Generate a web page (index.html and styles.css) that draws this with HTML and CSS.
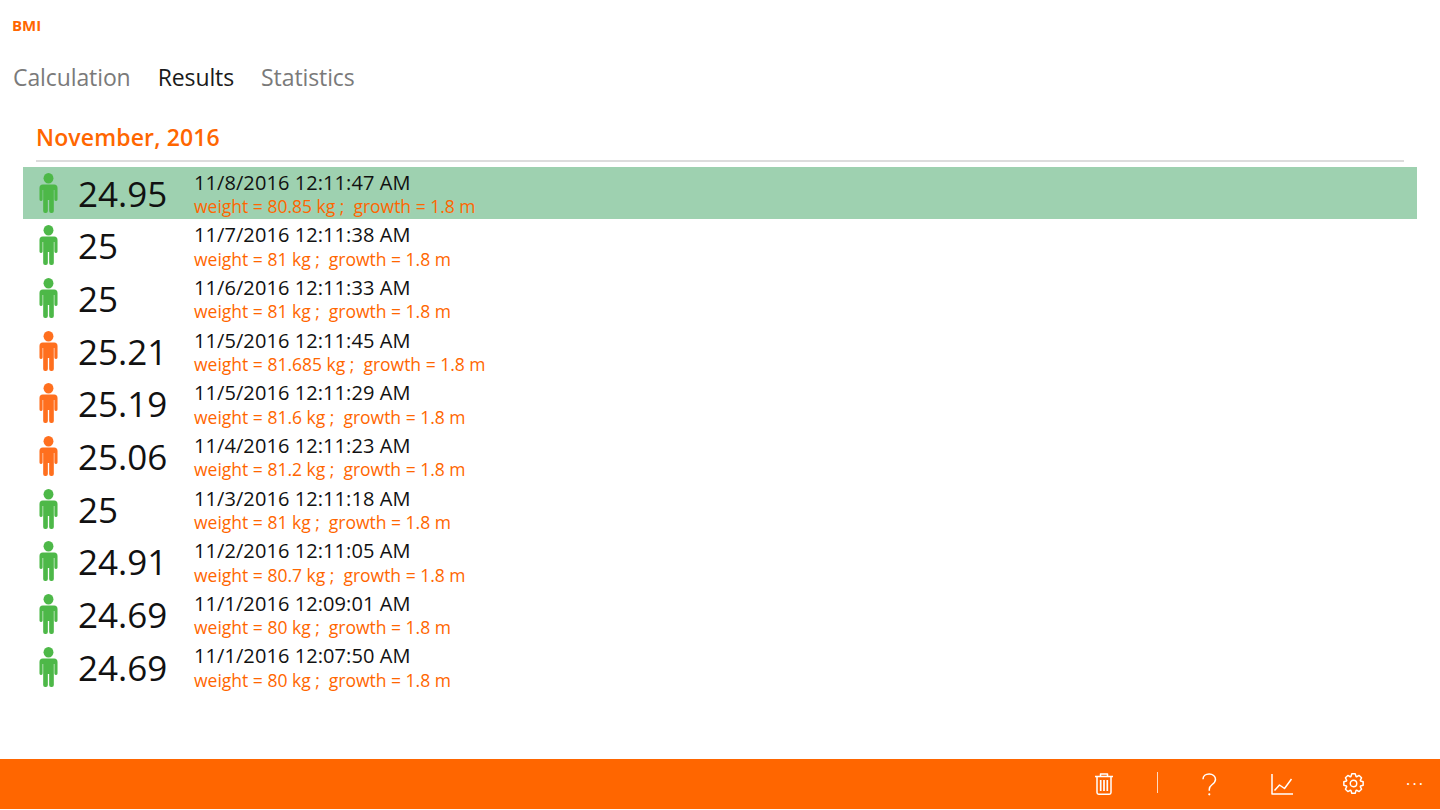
FILE: index.html
```html
<!DOCTYPE html>
<html lang="en">
<head>
<meta charset="utf-8">
<title>BMI</title>
<link rel="stylesheet" href="styles.css">
</head>
<body>
<svg class="defs" width="0" height="0" aria-hidden="true">
  <symbol id="person" viewBox="0 0 20 40" preserveAspectRatio="none">
    <circle cx="10" cy="5.200" r="5.200"/>
    <path d="M4 11.500h12a3.500 3.500 0 0 1 3.500 3.500v11.500a1.400 1.400 0 0 1-1.400 1.400h-.5a1.400 1.400 0 0 1-1.400-1.400V17h-.6v21a2 2 0 0 1-2 2h-.9a2 2 0 0 1-2-2V27h-1.400v11a2 2 0 0 1-2 2h-.9a2 2 0 0 1-2-2V17h-.6v9.500a1.400 1.400 0 0 1-1.400 1.400h-.5a1.400 1.400 0 0 1-1.400-1.400V15a3.500 3.500 0 0 1 3.500-3.500z"/>
  </symbol>
</svg>
<div class="app">
  <header class="title">BMI</header>
  <nav class="tabs">
    <span class="tab">Calculation</span>
    <span class="tab active">Results</span>
    <span class="tab">Statistics</span>
  </nav>
  <main class="content">
    <h2 class="month">November, 2016</h2>
    <ul class="list">
      <li class="row selected"><svg class="person ok"><use href="#person"/></svg><span class="bmi">24.95</span><div class="info"><div class="date">11/8/2016 12:11:47 AM</div><div class="detail">weight = 80.85 kg ;<span class="growth">growth = 1.8 m</span></div></div></li>
      <li class="row"><svg class="person ok"><use href="#person"/></svg><span class="bmi">25</span><div class="info"><div class="date">11/7/2016 12:11:38 AM</div><div class="detail">weight = 81 kg ;<span class="growth">growth = 1.8 m</span></div></div></li>
      <li class="row"><svg class="person ok"><use href="#person"/></svg><span class="bmi">25</span><div class="info"><div class="date">11/6/2016 12:11:33 AM</div><div class="detail">weight = 81 kg ;<span class="growth">growth = 1.8 m</span></div></div></li>
      <li class="row"><svg class="person over"><use href="#person"/></svg><span class="bmi">25.21</span><div class="info"><div class="date">11/5/2016 12:11:45 AM</div><div class="detail">weight = 81.685 kg ;<span class="growth">growth = 1.8 m</span></div></div></li>
      <li class="row"><svg class="person over"><use href="#person"/></svg><span class="bmi">25.19</span><div class="info"><div class="date">11/5/2016 12:11:29 AM</div><div class="detail">weight = 81.6 kg ;<span class="growth">growth = 1.8 m</span></div></div></li>
      <li class="row"><svg class="person over"><use href="#person"/></svg><span class="bmi">25.06</span><div class="info"><div class="date">11/4/2016 12:11:23 AM</div><div class="detail">weight = 81.2 kg ;<span class="growth">growth = 1.8 m</span></div></div></li>
      <li class="row"><svg class="person ok"><use href="#person"/></svg><span class="bmi">25</span><div class="info"><div class="date">11/3/2016 12:11:18 AM</div><div class="detail">weight = 81 kg ;<span class="growth">growth = 1.8 m</span></div></div></li>
      <li class="row"><svg class="person ok"><use href="#person"/></svg><span class="bmi">24.91</span><div class="info"><div class="date">11/2/2016 12:11:05 AM</div><div class="detail">weight = 80.7 kg ;<span class="growth">growth = 1.8 m</span></div></div></li>
      <li class="row"><svg class="person ok"><use href="#person"/></svg><span class="bmi">24.69</span><div class="info"><div class="date">11/1/2016 12:09:01 AM</div><div class="detail">weight = 80 kg ;<span class="growth">growth = 1.8 m</span></div></div></li>
      <li class="row"><svg class="person ok"><use href="#person"/></svg><span class="bmi">24.69</span><div class="info"><div class="date">11/1/2016 12:07:50 AM</div><div class="detail">weight = 80 kg ;<span class="growth">growth = 1.8 m</span></div></div></li>
    </ul>
  </main>
  <footer class="bar">
    <svg class="icon trash" viewBox="0 0 18 22"><path d="M0 3.600h18M5.500 3.600V1h7v2.600M2 3.600V19.500A1.700 1.700 0 0 0 3.700 21.200h10.600A1.700 1.700 0 0 0 16 19.500V3.600"/><path class="bars" d="M5.700 7v11M9 7v11M12.300 7v11"/></svg>
    <span class="sep"></span>
    <svg class="icon help" viewBox="0 0 15 23"><path d="M1 6.200C1 3 3.700 1 7.200 1s6.300 2.200 6.300 5.300c0 2.600-1.500 3.900-3.300 5.200C8.500 12.800 7.300 14 7.300 16.300v1.500"/><circle class="dot" cx="7.300" cy="21.300" r="1.100"/></svg>
    <svg class="icon chart" viewBox="0 0 22 21"><path d="M1 0v20h21M3.500 16.500l5-5.500 5 3.500L20.500 5"/></svg>
    <svg class="icon gear" viewBox="0 0 22 22"><circle cx="11" cy="11" r="3.400"/><path d="M8.330 3.670L9.210.86H12.790L13.670 3.670 14.300 3.930 16.910 2.560 19.440 5.090 18.070 7.700 18.330 8.330 21.140 9.210V12.790L18.330 13.670 18.070 14.300 19.440 16.910 16.910 19.440 14.300 18.070 13.670 18.330 12.790 21.140H9.210L8.330 18.330 7.700 18.070 5.090 19.440 2.560 16.910 3.930 14.300 3.670 13.670.86 12.790V9.210L3.670 8.330 3.930 7.700 2.560 5.090 5.090 2.560 7.700 3.930z"/></svg>
    <span class="more">···</span>
  </footer>
</div>
</body>
</html>
```
FILE: styles.css
```css
* { box-sizing: border-box; }
html, body { margin: 0; padding: 0; }
body {
  width: 1440px;
  height: 810px;
  overflow: hidden;
  background: #fff;
  font-family: "Open Sans", "Noto Sans", sans-serif;
}
.defs { position: absolute; }
.app { display: flex; flex-direction: column; height: 810px; }
.title {
  height: 53px;
  padding: 15px 0 0 12px;
  font-size: 15px;
  line-height: 20px;
  font-weight: 700;
  color: #ff6600;
}
.tabs {
  display: flex;
  gap: 27px;
  height: 64px;
  padding: 6px 0 0 13px;
  font-size: 23px;
  line-height: 36px;
  letter-spacing: -0.1px;
  color: #7a7a7a;
}
.tab.active { color: #1a1a1a; }
.content { flex: 1; padding: 0 23px; min-height: 0; }
.month {
  margin: 0 13px;
  height: 45px;
  padding-top: 3px;
  font-size: 23px;
  line-height: 34px;
  font-weight: 600;
  letter-spacing: 0.14px;
  color: #ff6600;
  border-bottom: 2px solid #dcdcdc;
}
.list { list-style: none; margin: 5px 0 0; padding: 0; }
.row {
  display: flex;
  align-items: center;
  height: 52.67px;
  padding-left: 15.500px;
}
.row.selected {
  background: linear-gradient(#9ed1b0, #9ed1b0) no-repeat;
  background-size: 100% 52px;
}
.person { width: 19px; height: 40px; flex: none; margin-top: -1px; }
.person.ok { fill: #4db848; }
.person.over { fill: #ff6f1e; }
.bmi {
  width: 116px;
  margin-left: 20.500px;
  margin-top: 1px;
  font-size: 35px;
  line-height: 52px;
  color: #111;
}
.info { display: flex; flex-direction: column; margin-top: 3px; }
.date {
  font-size: 20px;
  line-height: 25.500px;
  letter-spacing: 0.08px;
  color: #111;
  margin-top: -2px;
}
.detail {
  font-size: 17.500px;
  line-height: 23px;
  color: #ff6600;
  white-space: nowrap;
}
.growth { margin-left: 9px; }
.bar {
  flex: none;
  height: 50px;
  margin-bottom: 1px;
  background: #ff6600;
  position: relative;
}
.icon {
  position: absolute;
  fill: none;
  stroke: #fff;
  stroke-width: 1.500;
  stroke-linejoin: round;
}
.trash { left: 1095px; top: 14px; width: 18px; height: 22px; }
.bars { stroke-width: 1.700; }
.sep { position: absolute; left: 1157px; top: 13px; width: 1px; height: 21px; background: #ffd9bf; }
.help { left: 1202px; top: 14px; width: 15px; height: 23px; }
.chart { left: 1271px; top: 15px; width: 22px; height: 21px; }
.gear { left: 1343px; top: 14px; width: 21px; height: 21px; }
.dot { fill: #fff; stroke: none; }
.more {
  position: absolute;
  left: 1406px;
  top: 11px;
  font-size: 16px;
  line-height: 28px;
  letter-spacing: 2.200px;
  color: #fff;
}
```
